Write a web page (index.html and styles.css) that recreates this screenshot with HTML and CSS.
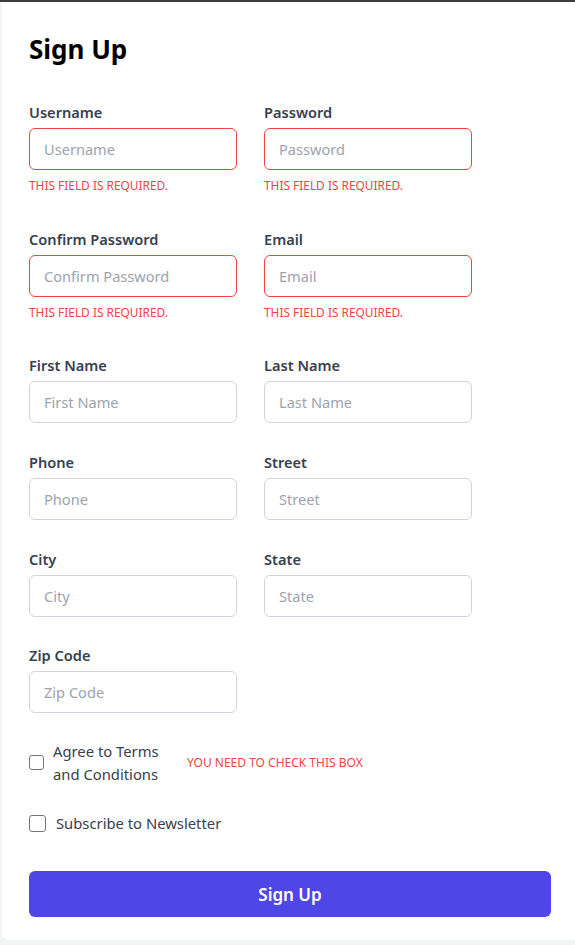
FILE: index.html
```html
<!DOCTYPE html>
<html lang="en">
<head>
<meta charset="utf-8">
<title>Sign Up</title>
<link rel="stylesheet" href="styles.css">
</head>
<body>
<div class="topbar"></div>
<main class="page">
  <form class="card">
    <h1 class="title">Sign Up</h1>
    <div class="grid">
      <div class="field">
        <label class="label">Username</label>
        <input class="input input-error" type="text" placeholder="Username">
        <p class="error">This field is required.</p>
      </div>
      <div class="field">
        <label class="label">Password</label>
        <input class="input input-error" type="password" placeholder="Password">
        <p class="error">This field is required.</p>
      </div>
      <div class="field">
        <label class="label">Confirm Password</label>
        <input class="input input-error" type="password" placeholder="Confirm Password">
        <p class="error">This field is required.</p>
      </div>
      <div class="field">
        <label class="label">Email</label>
        <input class="input input-error" type="email" placeholder="Email">
        <p class="error">This field is required.</p>
      </div>
      <div class="field">
        <label class="label">First Name</label>
        <input class="input" type="text" placeholder="First Name">
      </div>
      <div class="field">
        <label class="label">Last Name</label>
        <input class="input" type="text" placeholder="Last Name">
      </div>
      <div class="field">
        <label class="label">Phone</label>
        <input class="input" type="text" placeholder="Phone">
      </div>
      <div class="field">
        <label class="label">Street</label>
        <input class="input" type="text" placeholder="Street">
      </div>
      <div class="field">
        <label class="label">City</label>
        <input class="input" type="text" placeholder="City">
      </div>
      <div class="field">
        <label class="label">State</label>
        <input class="input" type="text" placeholder="State">
      </div>
      <div class="field">
        <label class="label">Zip Code</label>
        <input class="input" type="text" placeholder="Zip Code">
      </div>
    </div>

    <div class="check-row terms">
      <span class="box box-sm"></span>
      <span class="check-text terms-text">Agree to Terms and Conditions</span>
      <span class="check-error">You need to check this box</span>
    </div>

    <div class="check-row subscribe">
      <span class="box box-md"></span>
      <span class="check-text">Subscribe to Newsletter</span>
    </div>

    <button class="submit" type="button">Sign Up</button>
  </form>
</main>
</body>
</html>
```

FILE: styles.css
```css
html, body {
  margin: 0;
  padding: 0;
  overflow: hidden;
}
body {
  background: #f3f4f6;
  font-family: "Noto Sans", "Open Sans", sans-serif;
  color: #374151;
  height: 945px;
}
.topbar {
  height: 2px;
  background: #3d3d3d;
}
.page {
  padding-left: 2px;
}
.card {
  width: 522px;
  background: #ffffff;
  padding: 27px 27px 23px 27px;
  border-radius: 0 0 8px 8px;
}
.title {
  margin: 0 0 32px 0;
  font-size: 26px;
  line-height: 40px;
  font-weight: 700;
  color: #000000;
}
.grid {
  display: grid;
  grid-template-columns: 208px 208px;
  column-gap: 27px;
  row-gap: 27.67px;
}
.field {
  display: flex;
  flex-direction: column;
}
.label {
  font-size: 14.6px;
  line-height: 22px;
  font-weight: 600;
  color: #374151;
  margin-bottom: 5px;
}
.input {
  box-sizing: border-box;
  width: 208px;
  height: 42px;
  border: 1px solid #d1d5db;
  border-radius: 6px;
  padding: 0 14px;
  font-family: inherit;
  font-size: 14.6px;
  color: #374151;
  background: #fff;
  outline: none;
}
.input::placeholder {
  color: #9ca3af;
}
.input-error {
  border-color: #ef4444;
}
.error {
  margin: 7px 0 7px 0;
  font-size: 11.9px;
  line-height: 16px;
  color: #ef4444;
  text-transform: uppercase;
}
.check-row {
  display: flex;
  align-items: center;
}
.terms {
  margin-top: 26.5px;
}
.subscribe {
  margin-top: 26px;
}
.box {
  box-sizing: border-box;
  border: 1px solid #767676;
  border-radius: 3px;
  background: #fff;
  flex: none;
}
.box-sm {
  width: 15px;
  height: 15px;
  margin-right: 9px;
}
.box-md {
  width: 17px;
  height: 17px;
  margin-right: 10px;
}
.check-text {
  font-size: 14.8px;
  line-height: 23px;
  color: #374151;
}
.terms-text {
  width: 112px;
}
.check-error {
  margin-left: 22px;
  font-size: 12px;
  line-height: 16px;
  color: #ef4444;
  text-transform: uppercase;
}
.submit {
  display: block;
  margin-top: 36.5px;
  width: 522px;
  height: 46px;
  border: none;
  border-radius: 6px;
  background: #4f46e5;
  color: #fff;
  font-family: inherit;
  font-size: 17px;
  font-weight: 600;
}
```
